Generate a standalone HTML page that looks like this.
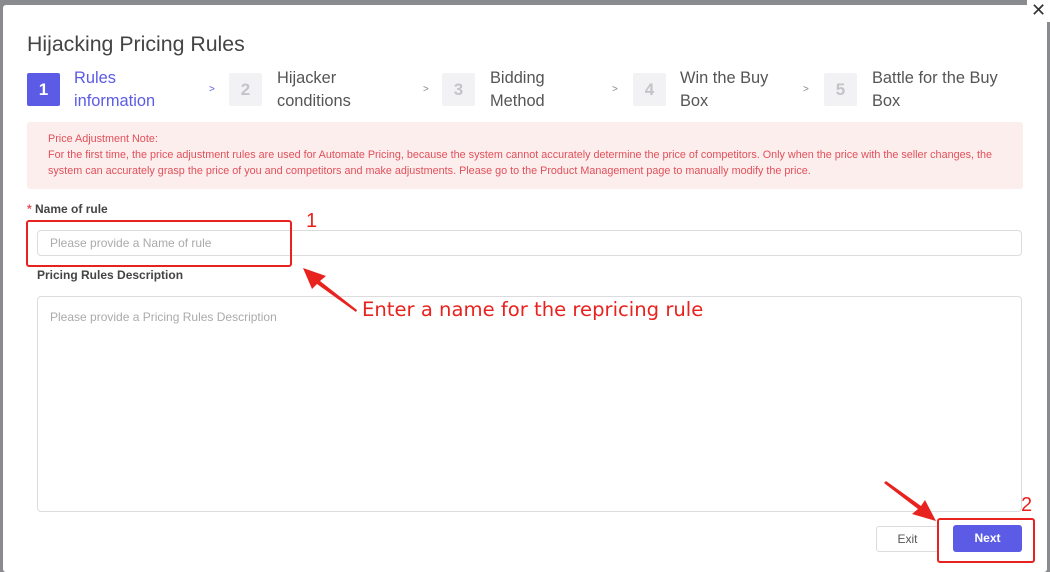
<!DOCTYPE html>
<html><head><meta charset="utf-8"><style>
*{margin:0;padding:0;box-sizing:border-box}
body{width:1050px;height:572px;background:#8a8b8e;position:relative;overflow:hidden;font-family:"Liberation Sans",sans-serif}
.a{position:absolute}
.modal{left:3px;top:5px;width:1044px;height:567px;background:#fff;border-radius:3px}
.num{width:33px;height:33px;top:73px;font-size:17px;font-weight:bold;text-align:center;line-height:33px;color:#c4c4c8;background:#f2f2f4;border-radius:2px}
.st{top:67px;font-size:16.4px;line-height:23px;color:#555}
.gt{top:84px;font-size:10px;color:#888}
</style></head><body>
<div class="a modal"></div>
<div class="a" style="left:1027px;top:0;width:23px;height:22px;background:#fff;border-radius:0 0 0 6px;font-size:18px;text-align:center;line-height:20px;color:#333">✕</div>
<div class="a" style="left:27px;top:32px;font-size:21.3px;color:#444">Hijacking Pricing Rules</div>

<div class="a num" style="left:27px;background:#5b5be6;color:#fff">1</div>
<div class="a st" style="left:74px;color:#5b5be6">Rules<br>information</div>
<div class="a gt" style="left:209px;color:#5b5be6">&gt;</div>
<div class="a num" style="left:229px">2</div>
<div class="a st" style="left:277px">Hijacker<br>conditions</div>
<div class="a gt" style="left:423px">&gt;</div>
<div class="a num" style="left:442px">3</div>
<div class="a st" style="left:490px">Bidding<br>Method</div>
<div class="a gt" style="left:612px">&gt;</div>
<div class="a num" style="left:633px">4</div>
<div class="a st" style="left:680px">Win the Buy<br>Box</div>
<div class="a gt" style="left:803px">&gt;</div>
<div class="a num" style="left:824px">5</div>
<div class="a st" style="left:872px">Battle for the Buy<br>Box</div>

<div class="a" style="left:27px;top:122px;width:996px;height:67px;background:#fdeeee;border-radius:3px;color:#e0505a;font-size:10.8px;line-height:16px;padding:9px 0 0 21px;white-space:nowrap">Price Adjustment Note:<br>For the first time, the price adjustment rules are used for Automate Pricing, because the system cannot accurately determine the price of competitors. Only when the price with the seller changes, the<br>system can accurately grasp the price of you and competitors and make adjustments. Please go to the Product Management page to manually modify the price.</div>

<div class="a" style="left:27px;top:202px;font-size:12px;font-weight:bold;color:#444"><span style="color:#e0505a">* </span>Name of rule</div>
<div class="a" style="left:37px;top:230px;width:985px;height:26px;border:1px solid #dcdcdf;border-radius:4px;font-size:12px;color:#aaa;padding:5px 12px">Please provide a Name of rule</div>
<div class="a" style="left:37px;top:268px;font-size:12px;font-weight:bold;color:#444">Pricing Rules Description</div>
<div class="a" style="left:37px;top:296px;width:985px;height:216px;border:1px solid #dcdcdf;border-radius:4px;font-size:12px;color:#aaa;padding:13px 12px">Please provide a Pricing Rules Description</div>

<div class="a" style="left:876px;top:526px;width:63px;height:26px;border:1px solid #dcdcdf;border-radius:3px;font-size:12px;color:#555;text-align:center;line-height:24px">Exit</div>
<div class="a" style="left:953px;top:525px;width:69px;height:27px;background:#5b5be6;border-radius:3px;font-size:12px;font-weight:bold;color:#fff;text-align:center;line-height:27px">Next</div>

<div class="a" style="left:26px;top:220px;width:266px;height:47px;border:2.5px solid #e8231f;border-radius:3px"></div>
<div class="a" style="left:306px;top:210px;font-size:20px;color:#e8231f">1</div>
<div class="a" style="left:937px;top:518px;width:98px;height:45px;border:2.5px solid #e8231f;border-radius:3px"></div>
<div class="a" style="left:1021px;top:494px;font-size:20px;color:#e8231f">2</div>
<div class="a" style="left:362px;top:298px;font-size:19.6px;color:#e8231f;font-family:'DejaVu Sans',sans-serif">Enter a name for the repricing rule</div>
<svg class="a" style="left:0;top:0" width="1050" height="572">
<polygon points="303,268 326,276 320,281 357,310 356,312 317,284 312,289" fill="#e8231f"/>
<polygon points="936,521 912,514 918,509 884,483 886,481 921,506 925,500" fill="#e8231f"/>
</svg>
</body></html>
